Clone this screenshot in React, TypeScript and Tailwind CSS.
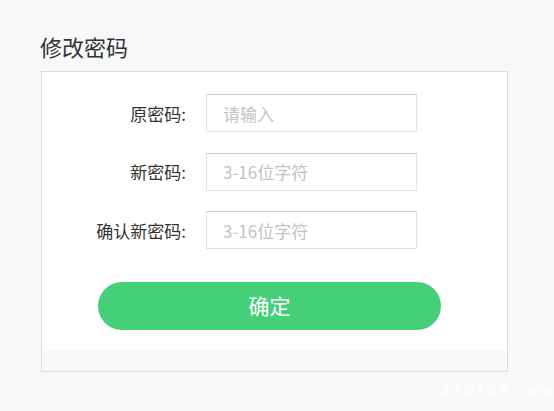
import React from 'react';

const fields = [
    { label: '原密码:', placeholder: '请输入' },
    { label: '新密码:', placeholder: '3-16位字符' },
    { label: '确认新密码:', placeholder: '3-16位字符' },
];

export default function App() {
    return (
        <div
            className="relative min-h-screen bg-[#f7f8fa] pl-[41px] pt-[31px] text-[#333]"
            style={{ fontFamily: '"Noto Sans CJK SC", "Noto Sans", sans-serif' }}
        >
            <h1 className="-ml-px text-[22px] leading-[30px] font-normal">修改密码</h1>

            <div className="mt-[10px] w-[467px] border border-[#dcdcdc] bg-white">
                <div className="pt-[22px]">
                    {fields.map((f) => (
                        <div key={f.label} className="mb-[20.5px] flex items-center">
                            <label className="w-[144px] text-right text-[17px] leading-none">{f.label}</label>
                            <input
                                type="password"
                                placeholder={f.placeholder}
                                className="ml-[20px] h-[38px] w-[211px] border border-[#e3e3e3] border-t-[#c9c9c9] px-[16px] text-[17px] outline-none placeholder:text-[#c3c3c3]"
                            />
                        </div>
                    ))}
                </div>

                <button className="mt-[12px] ml-[56px] h-[48px] w-[343px] rounded-full bg-[#45cf78] text-[21px] text-white">
                    确定
                </button>

                <div className="mt-[21px] h-[20px] bg-[#f7f8fa]" />
            </div>

            {/* watermark */}
            <span className="absolute right-0 bottom-[8px] text-[16px] font-bold tracking-wide text-white/70" style={{ fontFamily: '"DejaVu Sans", sans-serif' }}>
                228185.com
            </span>
        </div>
    );
}
